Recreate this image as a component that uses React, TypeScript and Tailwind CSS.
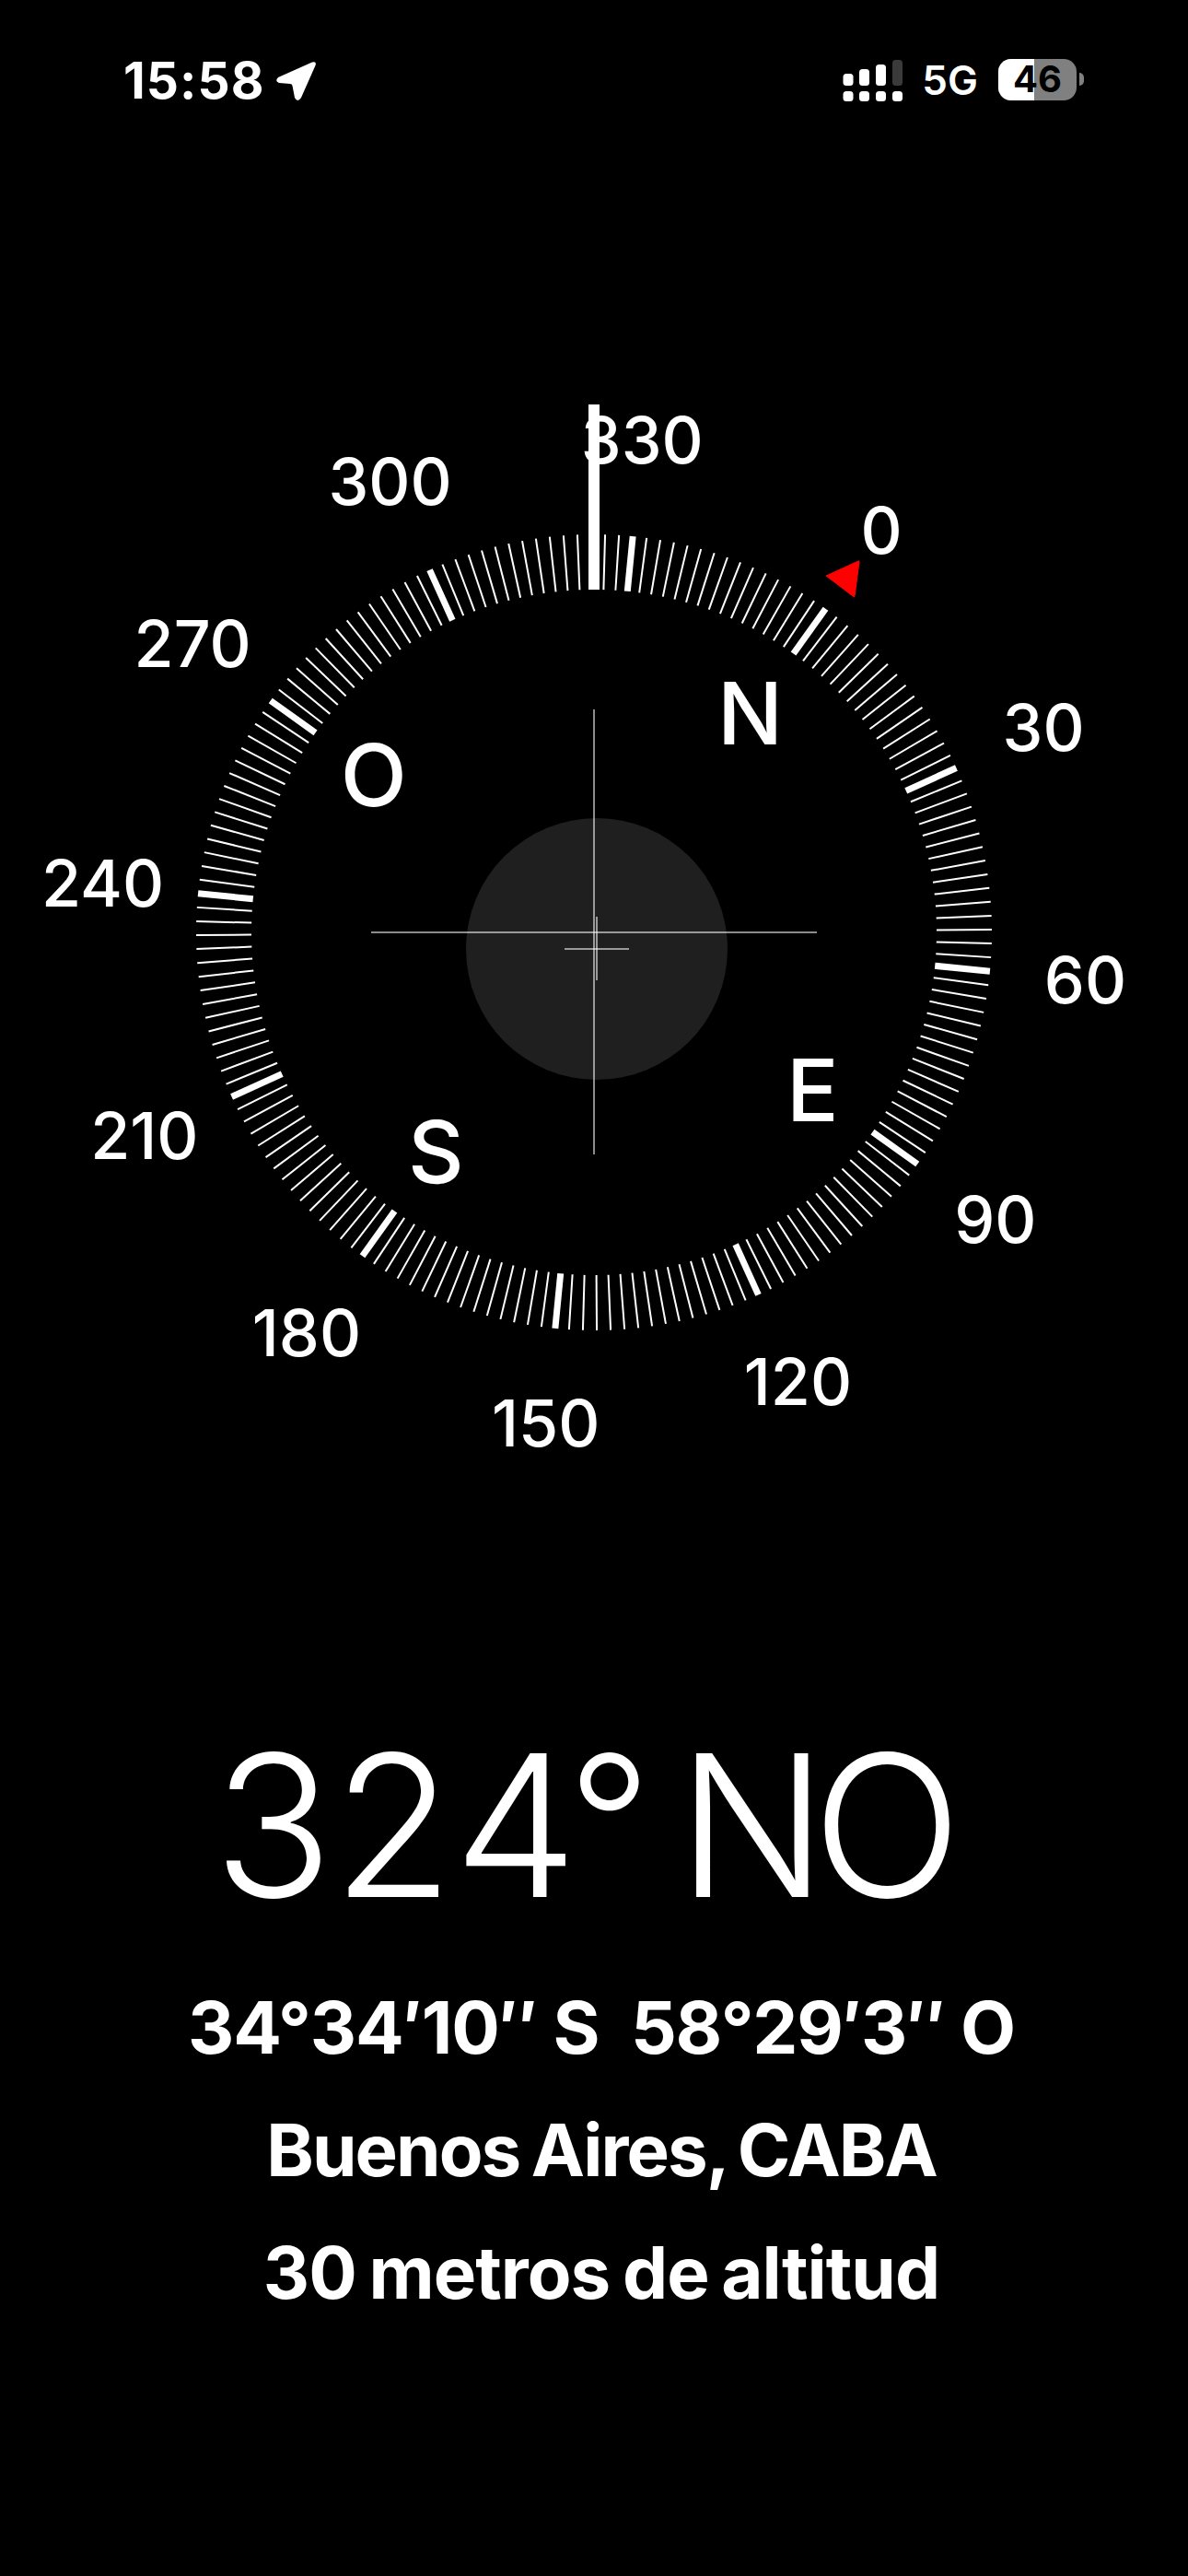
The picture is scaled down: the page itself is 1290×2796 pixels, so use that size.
const CENTER = 645;
const CY = 645;
const ROTATION = 35.6;

// Bearing numbers around the dial
const bearings = [0, 30, 60, 90, 120, 150, 180, 210, 240, 270, 300, 330];
const cardinals = [
  { label: "N", deg: 0 },
  { label: "E", deg: 90 },
  { label: "S", deg: 180 },
  { label: "O", deg: 270 },
];

function polar(deg: number, r: number) {
  const a = ((deg + ROTATION) * Math.PI) / 180;
  return { x: CENTER + r * Math.sin(a), y: CY - r * Math.cos(a) };
}

function Ticks() {
  const ticks = [];
  for (let d = 0; d < 360; d += 2) {
    const outer = polar(d, 432);
    const inner = polar(d, 372);
    ticks.push(
      <line
        key={d}
        x1={outer.x}
        y1={outer.y}
        x2={inner.x}
        y2={inner.y}
        stroke="#fff"
        strokeWidth={d % 30 === 0 ? 7 : 2}
      />,
    );
  }
  return <g>{ticks}</g>;
}

function StatusBar() {
  return (
    <div className="flex h-[120px] items-start justify-between pl-[134px] pr-[113px] pt-[58px] text-white">
      <div className="flex items-center gap-[11px]">
        <span className="text-[55px] leading-[58px] font-bold tracking-[0.02em]">15:58</span>
        <svg width="46" height="46" viewBox="0 0 46 46" className="mt-[4px]">
          <path
            d="M3 18 L40 1.5 Q45 0 43.5 5 L28 40 Q24 46 21 40 L18.5 27 Q18 25 16 25 L4 24 Q-1 22 3 18 Z"
            fill="#fff"
          />
        </svg>
      </div>
      <div className="flex items-center">
        <svg width="66" height="46" viewBox="0 0 66 46" className="mt-[5px]">
          <rect x="0.5" y="34" width="11" height="11" rx="3.5" fill="#fff" />
          <rect x="18" y="34" width="11" height="11" rx="3.5" fill="#fff" />
          <rect x="36" y="34" width="11" height="11" rx="3.5" fill="#fff" />
          <rect x="54" y="34" width="11" height="11" rx="3.5" fill="#fff" />
          <rect x="0.5" y="15" width="11" height="13" rx="3.5" fill="#fff" />
          <rect x="18" y="10" width="11" height="18" rx="3.5" fill="#fff" />
          <rect x="36" y="5" width="11" height="23" rx="3.5" fill="#fff" />
          <rect x="54" y="0" width="11" height="28" rx="3.5" fill="#3a3a3a" />
        </svg>
        <span className="ml-[20px] mt-[4px] text-[44px] leading-[50px] font-semibold">5G</span>
        <div className="relative ml-[22px] mt-[2px] flex h-[45px] w-[85px] rounded-[14px] bg-[#808080]">
          <div className="h-full w-[39px] rounded-l-[14px] bg-white" />
          <span className="absolute inset-0 flex items-center justify-center text-[40px] leading-none font-bold text-black">
            46
          </span>
        </div>
        <div className="ml-[3px] mt-[2px] h-[14px] w-[5px] rounded-r-full bg-[#808080]" />
      </div>
    </div>
  );
}

function Compass() {
  return (
    <div className="relative mt-[247px] h-[1290px] w-[1290px] text-white">
      <svg width="1290" height="1290" viewBox="0 0 1290 1290" className="absolute inset-0">
        <circle cx="648" cy="663" r="142" fill="#1f1f1f" />
        <Ticks />
        <rect x="639" y="72" width="12" height="201" fill="#fff" />
        <path d="M897 258 L932 242 Q933 241 933 243 L928 280 Q928 282 926 280 Z" fill="#f00" stroke="#f00" strokeWidth="1" strokeLinejoin="round" />
        <g stroke="#fff" strokeOpacity="0.55" strokeWidth="2">
          <line x1="645" y1="403" x2="645" y2="886" />
          <line x1="403" y1="645" x2="887" y2="645" />
          <line x1="648" y1="628" x2="648" y2="697" />
          <line x1="613" y1="663" x2="683" y2="663" />
        </g>
      </svg>
      {bearings.map((b) => {
        const p = polar(b, 536);
        return (
          <span
            key={b}
            className="absolute -translate-x-1/2 -translate-y-1/2 text-[70px] leading-none font-medium"
            style={{ left: p.x, top: p.y - 0.5 }}
          >
            {b}
          </span>
        );
      })}
      {cardinals.map((c) => {
        const p = polar(c.deg, 293);
        return (
          <span
            key={c.label}
            className="absolute -translate-x-1/2 -translate-y-1/2 text-[94px] leading-none font-medium"
            style={{ left: p.x - 1, top: p.y }}
          >
            {c.label}
          </span>
        );
      })}
    </div>
  );
}

export default function App() {
  return (
    <div className="h-[2796px] w-[1290px] overflow-hidden bg-black text-white [font-family:Inter,sans-serif]">
      <StatusBar />
      <Compass />
      <div className="mt-[189px] flex flex-col items-center">
        <div className="ml-[-30px] text-[214px] leading-[260px] font-light [word-spacing:-32px]">
          <span>32</span>
          <span className="tracking-[-11px]">4</span>
          <span className="align-[10px] text-[200px]">°</span> <span className="tracking-[-16px]">NO</span>
        </div>
        <div className="mt-[22px] ml-[16px] flex flex-col items-center text-[78px] leading-[133px] font-bold whitespace-pre">
          <div className="tracking-[-0.015em]">34°34′10″ S  58°29′3″ O</div>
          <div className="tracking-[-0.025em] [word-spacing:-4px]">Buenos Aires, CABA</div>
          <div className="tracking-[-0.012em] [word-spacing:-4px]">30 metros de altitud</div>
        </div>
      </div>
    </div>
  );
}
